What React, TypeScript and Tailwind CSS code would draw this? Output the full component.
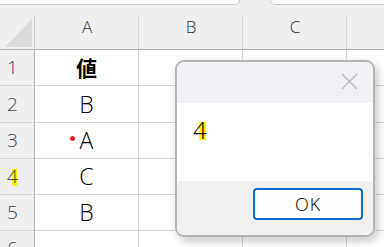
const rows = [
  { n: "1", v: "値", bold: true },
  { n: "2", v: "B" },
  { n: "3", v: "A", dot: true },
  { n: "4", v: "C", mark: true },
  { n: "5", v: "B" },
];

const heights = ["h-[36px]", "h-[37px]", "h-[36px]", "h-[36px]", "h-[36px]"];

function Marked({ ch, className }: { ch: string; className: string }) {
  return (
    <span className={`relative inline-block ${className}`}>
      <span className="absolute left-[45%] right-[5%] top-[22%] bottom-[18%] bg-[#ffef00]" />
      <span className="relative">{ch}</span>
    </span>
  );
}

export default function App() {
  return (
    <div className="relative w-[384px] h-[247px] overflow-hidden bg-[#efefef] font-['Open_Sans','Liberation_Sans',sans-serif] font-light text-[#222]">
      {/* formula bar stubs */}
      <div className="flex h-[5px]">
        <div className="w-[240px] h-[5px] bg-white border-b border-r border-[#c9c9c9] rounded-br-[6px]" />
        <div className="ml-[30px] flex-1 h-[5px] bg-white border-b border-l border-[#c9c9c9] rounded-bl-[6px]" />
      </div>

      {/* column headers */}
      <div className="flex h-[45px] border-b border-[#b4b4b4]">
        <div className="relative w-[35px] after:absolute after:right-0 after:top-[11px] after:bottom-0 after:w-px after:bg-[#cfcfcf]">
          <svg className="absolute left-[5px] top-[14px]" width="27" height="28" viewBox="0 0 27 28">
            <polygon points="27,0 27,28 0,28" fill="#dadada" />
          </svg>
        </div>
        {["A", "B", "C"].map((c) => (
          <div
            key={c}
            className="relative w-[104px] flex items-center justify-center text-[17px] text-[#333] after:absolute after:right-0 after:top-[11px] after:bottom-0 after:w-px after:bg-[#d4d4d4]"
          >
            {c}
          </div>
        ))}
        <div className="flex-1" />
      </div>

      {/* rows */}
      {rows.map((r, i) => (
        <div key={r.n} className={`flex ${heights[i]}`}>
          <div className="w-[35px] pl-[7px] flex items-center border-r border-b border-r-[#b4b4b4] border-b-[#d4d4d4] text-[19px] text-[#444]">
            {r.mark ? <Marked ch={r.n} className="" /> : r.n}
          </div>
          <div className="relative w-[104px] bg-white border-r border-b border-[#d6d6d6] flex items-center justify-center">
            {r.dot && (
              <span className="absolute left-[35px] top-[13px] w-[5px] h-[5px] rounded-full bg-[#e02020]" />
            )}
            <span
              className={
                r.bold
                  ? "text-[21px] font-bold text-black font-['Noto_Sans_CJK_JP',sans-serif]"
                  : "text-[23px] text-black"
              }
            >
              {r.v}
            </span>
          </div>
          <div className="w-[104px] bg-white border-r border-b border-[#d6d6d6]" />
          <div className="w-[104px] bg-white border-r border-b border-[#d6d6d6]" />
          <div className="flex-1 bg-white border-b border-[#d6d6d6]" />
        </div>
      ))}
      <div className="flex h-[20px]">
        <div className="w-[35px] pl-[7px] pt-[2px] border-r border-[#b4b4b4] text-[19px] leading-[30px] text-[#444]">6</div>
        <div className="w-[104px] bg-white border-r border-[#d6d6d6]" />
        <div className="w-[104px] bg-white border-r border-[#d6d6d6]" />
        <div className="w-[104px] bg-white border-r border-[#d6d6d6]" />
        <div className="flex-1 bg-white" />
      </div>

      {/* message box */}
      <div className="absolute left-[175px] top-[60px] w-[200px] h-[177px] flex flex-col rounded-[9px] border-2 border-[#b3b3b3] overflow-hidden shadow-[3px_4px_10px_rgba(0,0,0,0.22)]">
        <div className="h-[41px] bg-[#f0f1f5] flex items-start justify-end pt-[11px] pr-[15px]">
          <svg width="17" height="17" viewBox="0 0 17 17" stroke="#b8b8b8" strokeWidth="1.3">
            <line x1="1" y1="1" x2="16" y2="16" />
            <line x1="16" y1="1" x2="1" y2="16" />
          </svg>
        </div>
        <div className="h-[78px] bg-white pl-[16px] pt-[12px]">
          <Marked ch="4" className="text-[24px] leading-[30px] text-black" />
        </div>
        <div className="flex-1 bg-[#f0f0f0] pt-[7px] pl-[76px]">
          <div className="w-[110px] h-[32px] rounded-[4px] border-2 border-[#0a6fd0] bg-[#fdfdfd] flex items-center justify-center text-[18px] text-black tracking-[1px]">
            OK
          </div>
        </div>
      </div>
    </div>
  );
}
